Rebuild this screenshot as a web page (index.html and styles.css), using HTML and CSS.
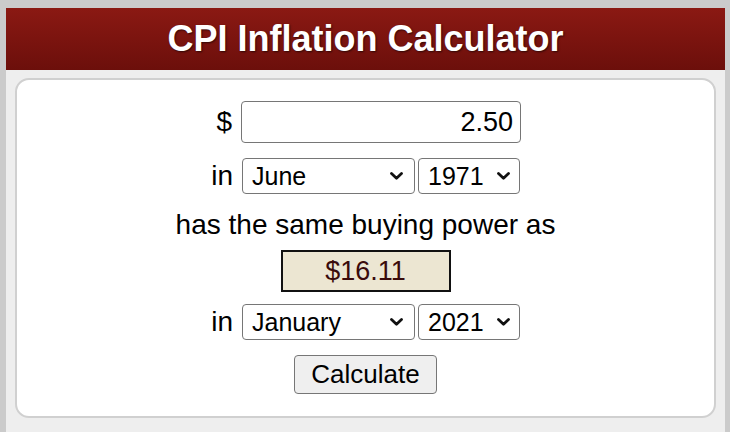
FILE: index.html
```html
<!DOCTYPE html>
<html lang="en">
<head>
    <meta charset="UTF-8">
    <title>CPI Inflation Calculator</title>
    <link rel="stylesheet" href="styles.css">
</head>
<body>
    <div class="calc">
        <div class="calc-header">CPI Inflation Calculator</div>

        <div class="card">
            <div class="row">
                <span class="row-label">$</span>
                <input type="text" class="amount" id="amount" value="2.50">
            </div>

            <div class="row row-select">
                <span class="row-label">in</span>
                <span class="select-wrap month">
                    <select id="fromMonth">
                        <option>January</option><option>February</option><option>March</option>
                        <option>April</option><option>May</option><option selected>June</option>
                        <option>July</option><option>August</option><option>September</option>
                        <option>October</option><option>November</option><option>December</option>
                    </select>
                    <svg class="chevron" width="13" height="8" viewBox="0 0 13 8"><path d="M1.5 1.5 L6.5 6.2 L11.5 1.5" fill="none" stroke="#111" stroke-width="2.8" stroke-linecap="round" stroke-linejoin="round"/></svg>
                </span>
                <span class="select-wrap year">
                    <select id="fromYear">
                        <option selected>1971</option>
                    </select>
                    <svg class="chevron" width="13" height="8" viewBox="0 0 13 8"><path d="M1.5 1.5 L6.5 6.2 L11.5 1.5" fill="none" stroke="#111" stroke-width="2.8" stroke-linecap="round" stroke-linejoin="round"/></svg>
                </span>
            </div>

            <div class="same-as">has the same buying power as</div>

            <div class="result" id="result">$16.11</div>

            <div class="row row-select row-to">
                <span class="row-label">in</span>
                <span class="select-wrap month">
                    <select id="toMonth">
                        <option selected>January</option><option>February</option><option>March</option>
                        <option>April</option><option>May</option><option>June</option>
                        <option>July</option><option>August</option><option>September</option>
                        <option>October</option><option>November</option><option>December</option>
                    </select>
                    <svg class="chevron" width="13" height="8" viewBox="0 0 13 8"><path d="M1.5 1.5 L6.5 6.2 L11.5 1.5" fill="none" stroke="#111" stroke-width="2.8" stroke-linecap="round" stroke-linejoin="round"/></svg>
                </span>
                <span class="select-wrap year">
                    <select id="toYear">
                        <option selected>2021</option>
                    </select>
                    <svg class="chevron" width="13" height="8" viewBox="0 0 13 8"><path d="M1.5 1.5 L6.5 6.2 L11.5 1.5" fill="none" stroke="#111" stroke-width="2.8" stroke-linecap="round" stroke-linejoin="round"/></svg>
                </span>
            </div>

            <button class="calc-btn" type="button">Calculate</button>
        </div>
    </div>
</body>
</html>
```

FILE: styles.css
```css
body {
    margin: 0;
    background: white;
    font-family: 'Liberation Sans', Arial, sans-serif;
}

.calc {
    width: 730px;
    height: 432px;
    box-sizing: border-box;
    border-style: solid;
    border-color: #cbcbcb;
    border-width: 8px 5px 0 6px;
    background: #eeeeee;
}

.calc-header {
    height: 62px;
    line-height: 62px;
    text-align: center;
    color: white;
    font-size: 36px;
    font-weight: bold;
    background: linear-gradient(#8b1913, #6c0f0b);
    text-shadow: 1px 1px 2px rgba(0,0,0,0.6);
}

.card {
    margin: 8px 9px 0 9px;
    padding: 21px 0 22px;
    background: white;
    border: 2px solid #d0d0d0;
    border-radius: 14px;
    display: flex;
    flex-direction: column;
    align-items: center;
    font-size: 28px;
    color: #000;
}

.row {
    display: flex;
    align-items: center;
    gap: 9px;
    height: 42px;
}

.row-label {
    width: 22px;
    text-align: right;
}

.amount {
    width: 280px;
    height: 42px;
    box-sizing: border-box;
    padding: 0 7px;
    border: 1px solid #767676;
    border-radius: 4px;
    text-align: right;
    font-family: inherit;
    font-size: 27px;
    color: #000;
}

.row-select {
    margin-top: 15px;
    height: 36px;
}

.select-wrap {
    position: relative;
    display: inline-block;
    height: 36px;
}

.select-wrap.year {
    margin-left: -6px;
}

.select-wrap select {
    appearance: none;
    -webkit-appearance: none;
    height: 36px;
    box-sizing: border-box;
    padding: 0 0 0 9px;
    border: 1px solid #767676;
    border-radius: 4px;
    background: white;
    font-family: inherit;
    font-size: 25px;
    color: #000;
}

.month select {
    width: 173px;
}

.year select {
    width: 102px;
}

.chevron {
    position: absolute;
    right: 12px;
    top: 14px;
    pointer-events: none;
}

.year .chevron {
    right: 10px;
}

.same-as {
    margin-top: 15px;
    line-height: 32px;
}

.result {
    margin-top: 9px;
    width: 170px;
    height: 42px;
    box-sizing: border-box;
    border: 2px solid #111;
    background: #ece6d2;
    color: #3a0b0b;
    text-align: center;
    line-height: 38px;
    font-size: 27px;
}

.row-to {
    margin-top: 12px;
}

.calc-btn {
    margin-top: 15px;
    width: 143px;
    height: 39px;
    border: 1px solid #767676;
    border-radius: 4px;
    background: #efefef;
    font-family: inherit;
    font-size: 26px;
    color: #000;
    padding: 0;
}
```
